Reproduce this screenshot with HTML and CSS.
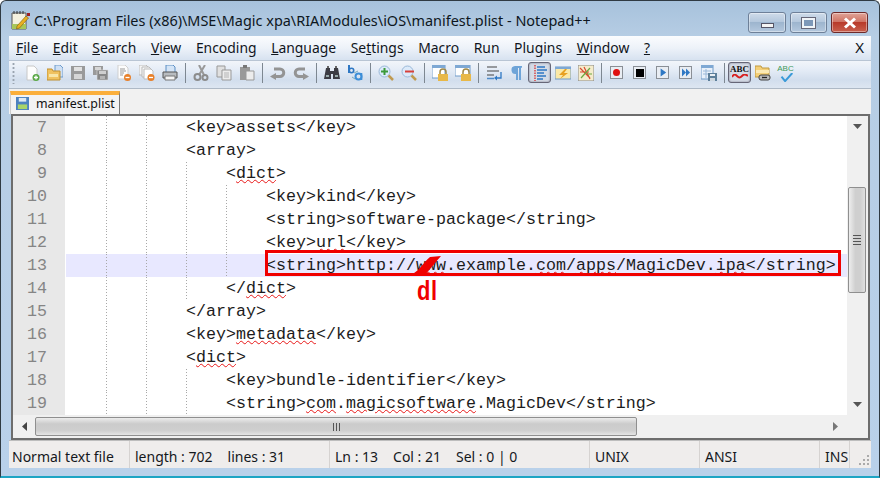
FILE: index.html
```html
<!DOCTYPE html>
<html lang="en">
<head>
<meta charset="utf-8">
<title>manifest.plist - Notepad++</title>
<link rel="stylesheet" href="styles.css">
</head>
<body>
<div class="window">
  <header class="titlebar">
    <svg class="appicon" viewBox="0 0 20 20"><path d="M1 3h14v16H1z" fill="#f4f1df" stroke="#555"/><path d="M3 1v3M6 1v3M9 1v3M12 1v3" stroke="#333"/><path d="M1 14h14v5H1z" fill="#a8c65a"/><path d="M6 16 15 6l2.500 2-9 10-3 1z" fill="#e8b020" stroke="#7a5a10" stroke-width=".6"/><path d="M16 3h3v3h-3z" fill="#a02020"/></svg>
    <div class="title">C:\Program Files (x86)\MSE\Magic xpa\RIAModules\iOS\manifest.plist - Notepad++</div>
    <div class="controls">
      <div class="ctl ctl-min"><span class="min-glyph"></span></div>
      <div class="ctl"><span class="max-glyph"></span></div>
      <div class="ctl ctl-close"><svg viewBox="0 0 14 12" class="x-glyph"><path d="M2 1.500 12 10.500M12 1.500 2 10.500" stroke="#fff" stroke-width="3"/></svg></div>
    </div>
  </header>

  <div class="panel">
    <nav class="menu">
      <span><u>F</u>ile</span><span><u>E</u>dit</span><span><u>S</u>earch</span><span><u>V</u>iew</span><span>Encoding</span><span><u>L</u>anguage</span><span>Se<u>t</u>tings</span><span>Macro</span><span>Run</span><span>Plugins</span><span><u>W</u>indow</span><span><u>?</u></span>
      <span class="menu-x">X</span>
    </nav>

    <div class="toolbar">
      <div class="grip"></div>
      <div class="tb"><svg viewBox="0 0 16 16"><path d="M3 1h7l3 3v11H3z" fill="#fdfdfd" stroke="#c8c8c8"/><circle cx="12" cy="12.500" r="3.500" fill="#5aa846"/><path d="M12 10.500v4M10 12.500h4" stroke="#fff" stroke-width="1.300"/></svg></div>
      <div class="tb"><svg viewBox="0 0 16 16"><path d="M8 0h5l3 3v9H8z" fill="#cfe0f4" stroke="#6f9ccc"/><path d="M0 4h5l1 2h7v9H0z" fill="#f0c260" stroke="#c09030"/><path d="M2 9h9v3H2z" fill="#f8e6a8"/></svg></div>
      <div class="tb"><svg viewBox="0 0 16 16"><path d="M1 1h14v14H1z" fill="#9a9a9a"/><path d="M4 2h8v4H4z" fill="#e2e2e2"/><path d="M4 9h8v5H4z" fill="#d6d6d6"/></svg></div>
      <div class="tb"><svg viewBox="0 0 16 16"><path d="M0 1h10v9H0z" fill="#9a9a9a"/><path d="M2 2h6v3H2z" fill="#d6d6d6"/><path d="M4 5h11v10H4z" fill="#888" stroke="#ddd" stroke-width=".6"/><path d="M6 6h7v3H6z" fill="#cfcfcf"/><path d="M7 11h5v3H7z" fill="#b4b4b4"/></svg></div>
      <div class="tb"><svg viewBox="0 0 16 16"><path d="M2 0h7l3 3v11H2z" fill="#fcfcfc" stroke="#cfcfcf"/><path d="M4 4h5M4 6h6M4 8h4M4 10h3" stroke="#999"/><circle cx="11.500" cy="12.500" r="3.500" fill="#e8802a"/><path d="M9.500 12.500h4" stroke="#fff" stroke-width="1.300"/></svg></div>
      <div class="tb"><svg viewBox="0 0 16 16"><path d="M0 0h7l2 2v8H0z" fill="#f4f4f4" stroke="#bbb"/><path d="M3 2h7l2 2v8H3z" fill="#f8f8f8" stroke="#bbb"/><path d="M5 4h7l2 2v8H5z" fill="#fff" stroke="#bbb"/><circle cx="12" cy="12.500" r="3.500" fill="#e8802a"/><path d="M10 12.500h4" stroke="#fff" stroke-width="1.300"/></svg></div>
      <div class="tb"><svg viewBox="0 0 16 16"><path d="M4 0h7l2 2v6H4z" fill="#d4e4f6" stroke="#5d8fc4"/><path d="M1 7h14v6H1z" fill="#b8bcc0" stroke="#555"/><path d="M3 11h10v4H3z" fill="#f4f4f4" stroke="#777"/></svg></div>
      <div class="sep"></div>
      <div class="tb"><svg viewBox="0 0 16 16"><path d="M12 0 6 10M6 0l5 10" stroke="#999" stroke-width="2"/><circle cx="4.500" cy="12" r="3" fill="none" stroke="#8c8c8c" stroke-width="2"/><circle cx="12" cy="12.500" r="2.500" fill="none" stroke="#8c8c8c" stroke-width="2"/></svg></div>
      <div class="tb"><svg viewBox="0 0 16 16"><path d="M1 1h8v11H1z" fill="#e0e0e0" stroke="#999"/><path d="M6 5h9v10H6z" fill="#ececec" stroke="#999"/><path d="M8 8h5M8 10h5M8 12h5" stroke="#b4b4b4"/></svg></div>
      <div class="tb"><svg viewBox="0 0 16 16"><path d="M1 2h10v13H1z" fill="#999"/><path d="M4 0h4v3H4z" fill="#777"/><path d="M7 6h8v9H7z" fill="#ececec" stroke="#999"/></svg></div>
      <div class="sep"></div>
      <div class="tb"><svg viewBox="0 0 16 16"><path d="M4 4h6a3.500 3.500 0 0 1 0 7.500H4" fill="none" stroke="#949494" stroke-width="3"/><path d="M6 8v7L0 11.500z" fill="#949494"/></svg></div>
      <div class="tb"><svg viewBox="0 0 16 16"><path d="M12 4H6a3.500 3.500 0 0 0 0 7.500h6" fill="none" stroke="#949494" stroke-width="3"/><path d="M10 8v7l6-3.500z" fill="#949494"/></svg></div>
      <div class="sep"></div>
      <div class="tb"><svg viewBox="0 0 16 16"><path d="M2 3h4v3h4V3h4l2 11H9V9H7v5H0z" fill="#3c3c44"/><path d="M3 1h2v2H3zM11 1h2v2h-2z" fill="#666"/><path d="M2 10h3v2H2zM11 10h3v2h-3z" fill="#9aa"/></svg></div>
      <div class="tb"><svg viewBox="0 0 16 16"><path d="M2 0v7h1" fill="none" stroke="#2f78c4" stroke-width="2"/><circle cx="4.500" cy="5.500" r="2.200" fill="none" stroke="#2f78c4" stroke-width="1.600"/><circle cx="11.500" cy="11.500" r="3" fill="none" stroke="#3c8ed8" stroke-width="2"/><path d="M14.500 8v7" stroke="#3c8ed8" stroke-width="1.600"/><path d="M7 8l4-2M5 12l3 2" stroke="#7ab"/></svg></div>
      <div class="sep"></div>
      <div class="tb"><svg viewBox="0 0 16 16"><circle cx="6.500" cy="6.500" r="5.500" fill="#dceafa" stroke="#9ab8d8"/><path d="M10.500 10.500 15 15" stroke="#c09a50" stroke-width="2.500"/><path d="M6.500 3v7M3 6.500h7" stroke="#3d9a3a" stroke-width="2"/></svg></div>
      <div class="tb"><svg viewBox="0 0 16 16"><circle cx="6.500" cy="6.500" r="5.500" fill="#dceafa" stroke="#9ab8d8"/><path d="M10.500 10.500 15 15" stroke="#c09a50" stroke-width="2.500"/><path d="M4 6.500h9" stroke="#d8403a" stroke-width="2"/></svg></div>
      <div class="sep"></div>
      <div class="tb"><svg viewBox="0 0 16 16"><path d="M0 0h13v13H0z" fill="#fff" stroke="#6e9ac8"/><path d="M0 0h13v3H0z" fill="#7ea8d4"/><path d="M6 9h10v7H6z" fill="#e8b848"/><path d="M8 9V7a3 3 0 0 1 6 0v2" fill="none" stroke="#a08848" stroke-width="1.500"/></svg></div>
      <div class="tb"><svg viewBox="0 0 16 16"><path d="M0 0h15v11H0z" fill="#fff" stroke="#6e9ac8"/><path d="M0 0h15v3H0z" fill="#7ea8d4"/><path d="M6 9h10v7H6z" fill="#e8b848"/><path d="M8 9V7a3 3 0 0 1 6 0v2" fill="none" stroke="#a08848" stroke-width="1.500"/></svg></div>
      <div class="sep"></div>
      <div class="tb"><svg viewBox="0 0 16 16"><path d="M1 2h10M1 6h12M1 10h7" stroke="#444" stroke-width="1.200"/><path d="M1 13.500h7" stroke="#4d8ac8" stroke-width="1.500"/><path d="M15 7v6h-5" fill="none" stroke="#2f78c4" stroke-width="1.300"/><path d="M11 10.500v5L8 13z" fill="#2f78c4"/></svg></div>
      <div class="tb"><svg viewBox="0 0 16 16"><path d="M6 1H13v1.800h-1V15h-2V3H9v12H7V9a4 4 0 0 1-1-8z" fill="#6ea4d8"/></svg></div>
      <div class="tb tb-on"><svg viewBox="0 0 16 16"><path d="M3 0v16" stroke="#d83030" stroke-dasharray="1.500 1" stroke-width="1.300"/><path d="M5 2h8M5 5h10M5 8h7M5 11h9M5 14h6" stroke="#2f78c4" stroke-width="1.500"/></svg></div>
      <div class="tb"><svg viewBox="0 0 16 16"><path d="M0 2h16v12H0z" fill="#fbe9a8" stroke="#6e9ac8"/><path d="M0 2h16v2H0z" fill="#7ea8d4"/><path d="M10 4 4 10h4l-3 4 8-6H9l3-4z" fill="#e8a020"/></svg></div>
      <div class="tb"><svg viewBox="0 0 16 16"><path d="M0 0h16v16H0z" fill="#f5eccc" stroke="#888"/><path d="M2 3l10 10M2 7h9M6 2l6 12" stroke="#d84a30" stroke-width="1.200"/><path d="M3 13l9-10M9 9h5" stroke="#6ca840" stroke-width="1.200"/></svg></div>
      <div class="sep"></div>
      <div class="tb"><div class="macro"><span class="m-rec"></span></div></div>
      <div class="tb"><div class="macro"><span class="m-stop"></span></div></div>
      <div class="tb"><div class="macro"><svg viewBox="0 0 10 10" class="m-play"><path d="M2 0l7 5-7 5z" fill="#2f78c4"/></svg></div></div>
      <div class="tb"><div class="macro"><svg viewBox="0 0 10 10" class="m-play"><path d="M0 0l5 5-5 5zM5 0l5 5-5 5z" fill="#2f78c4"/></svg></div></div>
      <div class="tb"><svg viewBox="0 0 16 16"><path d="M0 0h12v14H0z" fill="#e8f0fa" stroke="#6e9ac8"/><path d="M0 0h12v3H0z" fill="#7ea8d4"/><path d="M2 6h8M2 9h8M5 4v9" stroke="#9ab8d8"/><path d="M7 8h9v8H7z" fill="#5d7f9a"/><path d="M9 9h5v2H9z" fill="#e8eef4"/><path d="M9 13h5v3H9z" fill="#cdd7e0"/></svg></div>
      <div class="sep"></div>
      <div class="tb tb-on"><div class="abc"><span class="abc-text">ABC</span><svg viewBox="0 0 16 5" class="abc-wave"><path d="M0 3c2-3 3-3 5-1s3 2 5 0 3-2 6 0" fill="none" stroke="#d82020" stroke-width="2"/></svg></div></div>
      <div class="tb"><svg viewBox="0 0 16 16"><path d="M0 1h6l1 2h7v9H0z" fill="#f4cf78" stroke="#c09a40"/><path d="M1 5h13v3H1z" fill="#fbe9b4"/><rect x="4" y="10" width="11" height="5" rx="2" fill="#bbb" stroke="#444"/><path d="M7 12.500h5" stroke="#222" stroke-width="1.300"/></svg></div>
      <div class="tb"><div class="abc"><span class="abc-small">ABC</span><svg viewBox="0 0 16 10" class="abc-check"><path d="M3 4l4 5 8-9" fill="none" stroke="#3a9ad8" stroke-width="2.200"/></svg></div></div>
    </div>

    <div class="tabstrip">
      <div class="tab">
        <svg viewBox="0 0 14 14" class="tab-icon"><path d="M0 0h14v14H0z" fill="#4d82c0"/><path d="M3 1h8v4H3z" fill="#dfe9f4"/><path d="M2 8h10v5H2z" fill="#a8d468"/></svg>
        <span>manifest.plist</span>
      </div>
    </div>

    <div class="editor">
      <div class="text-area">
        <div class="line"><span class="no">7</span><span class="ind"></span><span class="ind g"></span><span class="ind g"></span><span>&lt;key&gt;assets&lt;/key&gt;</span></div>
        <div class="line"><span class="no">8</span><span class="ind"></span><span class="ind g"></span><span class="ind g"></span><span>&lt;array&gt;</span></div>
        <div class="line"><span class="no">9</span><span class="ind"></span><span class="ind g"></span><span class="ind g"></span><span class="ind g"></span><span>&lt;<span class="sq">dict</span>&gt;</span></div>
        <div class="line"><span class="no">10</span><span class="ind"></span><span class="ind g"></span><span class="ind g"></span><span class="ind g"></span><span class="ind g"></span><span>&lt;key&gt;kind&lt;/key&gt;</span></div>
        <div class="line"><span class="no">11</span><span class="ind"></span><span class="ind g"></span><span class="ind g"></span><span class="ind g"></span><span class="ind g"></span><span>&lt;string&gt;software-package&lt;/string&gt;</span></div>
        <div class="line"><span class="no">12</span><span class="ind"></span><span class="ind g"></span><span class="ind g"></span><span class="ind g"></span><span class="ind g"></span><span>&lt;key&gt;<span class="sq">url</span>&lt;/key&gt;</span></div>
        <div class="line current"><span class="no">13</span><span class="ind"></span><span class="ind g"></span><span class="ind g"></span><span class="ind g"></span><span class="ind g"></span><span>&lt;string&gt;http://<span class="sq">www</span>.example.<span class="sq">com</span>/<span class="sq">apps</span>/MagicDev.<span class="sq">ipa</span>&lt;/string&gt;</span></div>
        <div class="line"><span class="no">14</span><span class="ind"></span><span class="ind g"></span><span class="ind g"></span><span class="ind g"></span><span>&lt;/<span class="sq">dict</span>&gt;</span></div>
        <div class="line"><span class="no">15</span><span class="ind"></span><span class="ind g"></span><span class="ind g"></span><span>&lt;/array&gt;</span></div>
        <div class="line"><span class="no">16</span><span class="ind"></span><span class="ind g"></span><span class="ind g"></span><span>&lt;key&gt;<span class="sq">metadata</span>&lt;/key&gt;</span></div>
        <div class="line"><span class="no">17</span><span class="ind"></span><span class="ind g"></span><span class="ind g"></span><span>&lt;<span class="sq">dict</span>&gt;</span></div>
        <div class="line"><span class="no">18</span><span class="ind"></span><span class="ind g"></span><span class="ind g"></span><span class="ind g"></span><span>&lt;key&gt;bundle-identifier&lt;/key&gt;</span></div>
        <div class="line"><span class="no">19</span><span class="ind"></span><span class="ind g"></span><span class="ind g"></span><span class="ind g"></span><span>&lt;string&gt;<span class="sq">com</span>.<span class="sq">magicsoftware</span>.MagicDev&lt;/string&gt;</span></div>
      </div>
      <div class="vscroll">
        <svg viewBox="0 0 9 5" class="arrow-v"><path d="M0 0h9L4.500 5z" fill="#555"/></svg>
        <div class="vtrack"><div class="vthumb"><span class="gripline"></span><span class="gripline"></span><span class="gripline"></span><span class="gripline"></span></div></div>
        <svg viewBox="0 0 9 5" class="arrow-v"><path d="M0 0h9L4.500 5z" fill="#555"/></svg>
      </div>
      <div class="hscroll">
        <svg viewBox="0 0 5 9" class="arrow-h"><path d="M5 0v9L0 4.500z" fill="#444"/></svg>
        <div class="hthumb"><span class="hgrip"></span><span class="hgrip"></span><span class="hgrip"></span></div>
        <svg viewBox="0 0 5 9" class="arrow-h arrow-r"><path d="M0 0v9l5-4.500z" fill="#777"/></svg>
      </div>
      <div class="corner"></div>
    </div>

    <footer class="status">
      <div class="cell c1">Normal text file</div>
      <div class="cell c2"><span>length : 702</span><span>lines : 31</span></div>
      <div class="cell c3"><span>Ln : 13</span><span>Col : 21</span><span>Sel : 0 | 0</span></div>
      <div class="cell c4">UNIX</div>
      <div class="cell c5">ANSI</div>
      <div class="cell c6">INS</div>
      <div class="cell c7"><svg viewBox="0 0 12 12" class="size-grip"><path d="M9 1h2v2H9zM5 5h2v2H5zM9 5h2v2H9zM1 9h2v2H1zM5 9h2v2H5zM9 9h2v2H9z" fill="#aaa"/></svg></div>
    </footer>
  </div>

  <div class="redbox"></div>
  <svg class="slash" viewBox="0 0 30 20"><path d="M0 18C7 15 11 7 18 1L29 0C23 7 18 13 13 19 8 20 3 20 0 18z" fill="#f00000"/></svg>
  <div class="dl">dl</div>
</div>
</body>
</html>
```
FILE: styles.css
```css
* { box-sizing: border-box; }
html, body { margin: 0; padding: 0; }
body { width: 880px; height: 478px; overflow: hidden; background: #fff; }

.window {
  position: relative;
  width: 880px;
  height: 478px;
  display: flex;
  flex-direction: column;
  padding: 0 8px 8px;
  background: linear-gradient(#a7c2dc 0, #b6cde4 36px, #b9d1ea 100%);
  border: 1px solid #2f3a42;
  border-bottom: 2px solid #1ea5c4;
  border-radius: 6px 6px 0 0;
  font-family: "Noto Sans", "Open Sans", sans-serif;
  color: #111;
}

.titlebar { height: 35px; flex: none; display: flex; align-items: center; padding-right: 3px; }
.appicon { width: 20px; height: 20px; margin: 2px 3px 0 2px; flex: none; }
.title { font-size: 14.450px; white-space: nowrap; flex: 1; margin-top: 4px; color: #0d1620; }
.controls { display: flex; gap: 4px; align-self: flex-start; margin-top: 11px; }
.ctl {
  width: 37px; height: 21px;
  display: flex; align-items: center; justify-content: center;
  border: 1px solid #6e8098;
  border-radius: 3px;
  background: linear-gradient(#cfdcea 0, #b5c8dd 45%, #9db5ce 50%, #b4c8de 100%);
  box-shadow: inset 0 0 0 1px rgba(255,255,255,.4);
}
.ctl-min { width: 38px; }
.ctl-close { background: linear-gradient(#e0a498 0, #d07566 45%, #b83a2a 50%, #c9604e 100%); border-color: #6e2a2a; }
.min-glyph { width: 13px; height: 5px; margin-top: 5px; background: #f4f4f4; border: 1px solid #556; }
.max-glyph { width: 13px; height: 10px; background: #7d98b8; border: 2px solid #f0f4f8; outline: 1px solid #667; }
.x-glyph { width: 14px; height: 12px; }

.panel { flex: 1; min-height: 0; display: flex; flex-direction: column; }

.menu {
  height: 24px; flex: none;
  display: flex; align-items: center; gap: 14.600px;
  padding: 0 0 2px 7px;
  font-size: 13.900px;
  background: linear-gradient(#fbfcfe 0, #edf2f9 50%, #d7e2f0 100%);
  color: #10151c;
}
.menu span { white-space: nowrap; }
.menu-x { margin-left: auto; margin-right: 7px; font-size: 15px; }

.toolbar {
  height: 29px; flex: none;
  display: flex; align-items: center;
  padding: 0 0 4px 3px;
  background: linear-gradient(#f2f5fa 0, #e6edf7 30%, #d2deed 70%, #dde6f1 100%);
  border-top: 1px solid #b9c5d4;
  border-bottom: 1px solid #aeb9c6;
}
.grip { width: 8px; height: 22px; flex: none; background-image: radial-gradient(circle, #9aa4b0 1px, transparent 1.200px); background-size: 3px 4px; background-repeat: repeat-y; }
.tb { width: 23px; height: 21px; flex: none; display: flex; align-items: center; justify-content: center; }
.tb svg { width: 16px; height: 16px; }
.tb-on { border: 1px solid #667; border-radius: 3px; background: #d4dbe6; box-shadow: inset 0 0 2px #778; }
.sep { width: 8px; height: 20px; flex: none; background: linear-gradient(#7d8791, #7d8791) center / 1px 100% no-repeat; }
.macro { width: 13px; height: 13px; border: 1px solid #8a8f96; background: #e9edf3; display: flex; align-items: center; justify-content: center; }
.m-rec { width: 7px; height: 7px; border-radius: 50%; background: #e01010; }
.m-stop { width: 8px; height: 8px; background: #000; }
.tb .m-play { width: 8px; height: 9px; }
.abc { position: relative; width: 18px; height: 18px; display: flex; flex-direction: column; align-items: center; }
.abc-text { font: bold 9px/10px "Liberation Serif", serif; color: #111; }
.tb .abc-wave { width: 16px; height: 5px; }
.abc-small { font: 8px/9px "Liberation Sans", sans-serif; color: #3f9a58; }
.tb .abc-check { width: 16px; height: 10px; }

.tabstrip { height: 25px; flex: none; background: #f1f1f1; display: flex; align-items: flex-end; padding-left: 1px; }
.tab {
  width: 110px; height: 23px;
  display: flex; align-items: center; gap: 7px;
  padding: 0 0 3px 5px;
  background: #f3f3f3;
  border-top: 4px solid #fbaf3b;
  border-right: 1px solid #777;
  border-left: 1px solid #ccc;
  font-size: 12.400px;
}
.tab-icon { width: 13px; height: 13px; flex: none; }

.editor {
  flex: 1; min-height: 0;
  margin: 0 1px 0 2px;
  display: grid;
  grid-template-columns: 1fr 21px;
  grid-template-rows: 1fr 23px;
  border: 2px solid #6d6d6d;
  background: #fff;
}
.text-area { background: #fff; overflow: hidden; font: 16.670px/23px "Liberation Mono", "Courier New", monospace; color: #1c1c1c; }
.line { height: 23px; display: flex; white-space: pre; }
.no { width: 52px; flex: none; margin-right: 1px; padding-right: 18px; text-align: right; background: #e8e8e8; color: #858585; }
.line .ind { width: 40px; flex: none; }
.line .ind.g { background: repeating-linear-gradient(#a8a8a8 0 1px, transparent 1px 3px) left top / 1px 100% no-repeat; }
.current { background: #e8e8ff; }
.current .no { box-shadow: 1px 0 0 #fff; }
.sq { text-decoration: underline wavy #e81818; text-decoration-thickness: 1px; text-underline-offset: 1px; }

.vscroll { display: flex; flex-direction: column; align-items: center; background: #f0f0f0; }
.arrow-v { width: 9px; height: 5px; margin: 8px 0; flex: none; }
.vtrack { flex: 1; width: 100%; padding: 50px 0 0 1px; }
.vthumb {
  width: 18px; height: 106px;
  display: flex; flex-direction: column; align-items: center; justify-content: center; gap: 2px;
  background: linear-gradient(90deg, #ededed, #cfcfcf 40%, #cfcfcf 70%, #e0e0e0);
  border: 1px solid #8f8f8f; border-radius: 2px;
}
.gripline { width: 8px; height: 1px; background: #555; }
.hscroll { display: flex; align-items: center; background: #f0f0f0; padding: 0 0 0 9px; }
.arrow-h { width: 5px; height: 9px; flex: none; }
.arrow-r { margin-left: auto; margin-right: 9px; }
.hthumb {
  width: 602px; height: 19px; margin-left: 8px;
  display: flex; align-items: center; justify-content: center; gap: 2px;
  background: linear-gradient(#ececec, #cbcbcb 35%, #cfcfcf 75%, #e4e4e4);
  border: 1px solid #8f8f8f; border-radius: 2px;
}
.hgrip { width: 1px; height: 8px; background: #555; }
.corner { background: #f0f0f0; }

.status {
  height: 28px; flex: none;
  display: grid;
  grid-template-columns: 121px 200px 260px 110px 120px 30px 1fr;
  background: #efedec;
  font-size: 14px;
  color: #15181c;
  border-top: 1px solid #bdbdbd;
}
.cell { display: flex; align-items: center; white-space: nowrap; padding: 4px 0 0 3px; border-right: 1px solid #d6d3d1; }
.c2 { padding-left: 5px; gap: 15px; }
.c3 { padding-left: 5px; gap: 15px; }
.c4, .c5, .c6 { padding-left: 5px; }
.c7 { border-right: 0; justify-content: flex-end; align-items: flex-end; padding: 0 1px 2px 0; }
.size-grip { width: 12px; height: 12px; }

.redbox { position: absolute; left: 264px; top: 249px; width: 576px; height: 26px; border: 3px solid #f00000; }
.slash { position: absolute; left: 411px; top: 255px; width: 30px; height: 20px; }
.dl { position: absolute; left: 416px; top: 273px; font: bold 28px/34px "Liberation Sans", sans-serif; color: #f00000; transform: scaleX(.78); transform-origin: left center; letter-spacing: 1px; }
```
